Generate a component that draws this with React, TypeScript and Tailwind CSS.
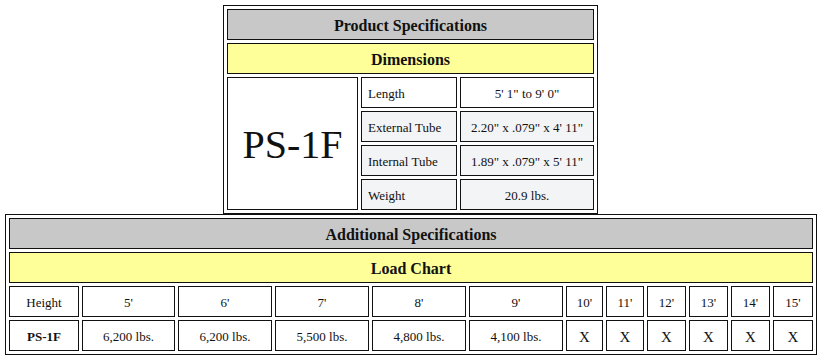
import React from 'react';

const dims = [
    { label: 'Length', value: `5' 1" to 9' 0"`, shade: false },
    { label: 'External Tube', value: `2.20" x .079" x 4' 11"`, shade: true },
    { label: 'Internal Tube', value: `1.89" x .079" x 5' 11"`, shade: true },
    { label: 'Weight', value: '20.9 lbs.', shade: true },
];

const heights = ["5'", "6'", "7'", "8'", "9'", "10'", "11'", "12'", "13'", "14'", "15'"];
const loads = ['6,200 lbs.', '6,200 lbs.', '5,500 lbs.', '4,800 lbs.', '4,100 lbs.', 'X', 'X', 'X', 'X', 'X', 'X'];

const cell = 'border border-[#111] flex items-center pt-[3px]';

const App: React.FC = () => {
    return (
        <div className="min-h-[360px] bg-white pt-[5px] font-['Liberation_Serif',serif] text-[#111]">
            {/* product dimensions */}
            <div className="mx-auto w-[375px] border border-[#111] p-[3px] grid grid-cols-[131px_96px_134px] auto-rows-[31px] gap-[3px]">
                <div className={`${cell} col-span-3 justify-center bg-[#c8c8c8] text-[16px] font-bold`}>Product Specifications</div>
                <div className={`${cell} col-span-3 justify-center bg-[#ffff99] text-[16px] font-bold`}>Dimensions</div>
                <div className={`${cell} row-span-4 justify-center bg-white text-[40px]`}>PS-1F</div>
                {dims.map((d) => (
                    <React.Fragment key={d.label}>
                        <div className={`${cell} pl-[6px] text-[13px] ${d.shade ? 'bg-[#f3f4f6]' : 'bg-white'}`}>{d.label}</div>
                        <div className={`${cell} justify-center text-[13px] ${d.shade ? 'bg-[#f3f4f6]' : 'bg-white'}`}>{d.value}</div>
                    </React.Fragment>
                ))}
            </div>

            {/* load chart */}
            <div className="ml-[5px] w-[812px] border border-[#111] p-[3px] grid grid-cols-[70px_93px_94px_94px_94px_94px_37px_38px_39px_39px_39px_40px] auto-rows-[31px] gap-[3px]">
                <div className={`${cell} col-span-12 justify-center bg-[#c8c8c8] text-[16px] font-bold`}>Additional Specifications</div>
                <div className={`${cell} col-span-12 justify-center bg-[#ffff99] text-[16px] font-bold`}>Load Chart</div>
                <div className={`${cell} justify-center text-[13px]`}>Height</div>
                {heights.map((h) => (
                    <div key={h} className={`${cell} justify-center text-[13px]`}>{h}</div>
                ))}
                <div className={`${cell} justify-center text-[13px] font-bold`}>PS-1F</div>
                {loads.map((l, i) => (
                    <div key={i} className={`${cell} justify-center ${l === 'X' ? 'text-[15px]' : 'text-[13px]'}`}>{l}</div>
                ))}
            </div>
        </div>
    );
};

export default App;
